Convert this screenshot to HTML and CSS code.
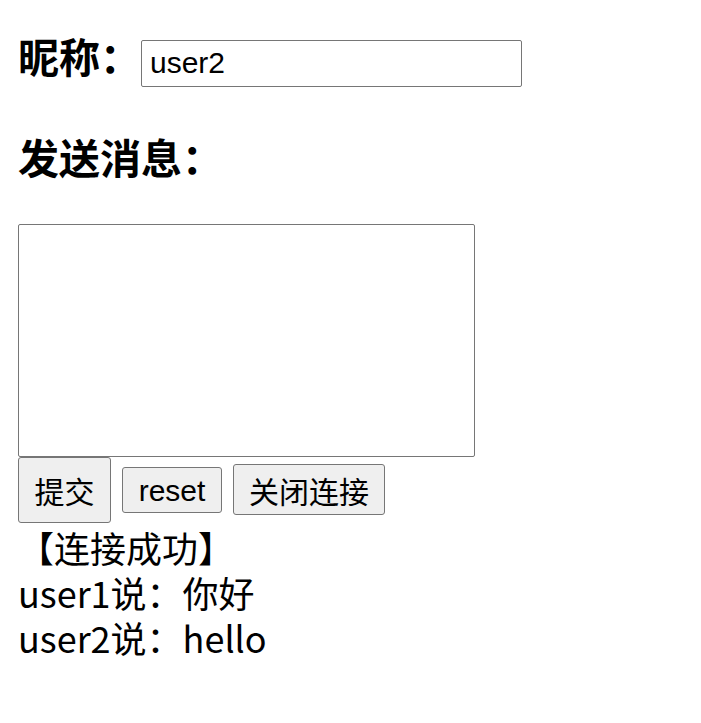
FILE: index.html
```html
<!DOCTYPE html>
<html lang="zh-CN">
<head>
    <meta charset="UTF-8">
    <meta name="viewport" content="width=device-width, initial-scale=1.0">
    <title>WebSocket 聊天</title>
    <link rel="stylesheet" href="styles.css">
</head>
<body>
    <div class="page">
        <div class="nick-row">
            <h3 class="title">昵称：</h3>
            <input type="text" id="nickname" class="nick-input" value="user2">
        </div>

        <h3 class="title send-title">发送消息：</h3>
        <textarea id="message" class="message-box"></textarea>

        <div class="actions">
            <button class="btn btn-submit">提交</button>
            <button class="btn btn-reset">reset</button>
            <button class="btn btn-close">关闭连接</button>
        </div>

        <!-- 消息记录 -->
        <div id="log" class="log">
            <div>【连接成功】</div>
            <div>user1说：你好</div>
            <div>user2说：hello</div>
        </div>
    </div>
</body>
</html>
```

FILE: styles.css
```css
/* General */
body {
    margin: 0;
    padding: 0;
    background: #fff;
    color: #000;
    font-family: "Noto Sans CJK SC", sans-serif;
}

.page {
    padding: 0 18px;
}

/* Headings */
.title {
    margin: 0;
    font-size: 41px;
    line-height: 48px;
    font-weight: bold;
}

.nick-row {
    display: flex;
    align-items: baseline;
    margin-top: 31px;
}

.nick-input {
    box-sizing: border-box;
    width: 381px;
    height: 47px;
    margin-left: 0;
    padding: 0 8px;
    border: 1px solid #767676;
    border-radius: 2px;
    font-family: "Liberation Sans", Arial, sans-serif;
    font-size: 30px;
    color: #000;
}

.send-title {
    margin-top: 45px;
}

/* Textarea */
.message-box {
    display: block;
    box-sizing: border-box;
    width: 457px;
    height: 233px;
    margin: 44px 0 0;
    border: 1px solid #767676;
    border-radius: 2px;
    resize: none;
}

/* Buttons */
.actions {
    display: flex;
    align-items: center;
    gap: 11px;
}

.btn {
    box-sizing: border-box;
    padding: 0;
    background: #efefef;
    border: 1px solid #767676;
    border-radius: 3px;
    color: #000;
    font-size: 30px;
    font-family: "Noto Sans CJK SC", sans-serif;
    line-height: 1;
}

.btn-submit {
    width: 93px;
    height: 66px;
}

.btn-reset {
    width: 100px;
    height: 46px;
    padding-top: 3px;
    font-family: "Liberation Sans", Arial, sans-serif;
}

.btn-close {
    width: 152px;
    height: 51px;
}

/* Log */
.log {
    margin-top: 2px;
    font-size: 36px;
    line-height: 45px;
}
```
